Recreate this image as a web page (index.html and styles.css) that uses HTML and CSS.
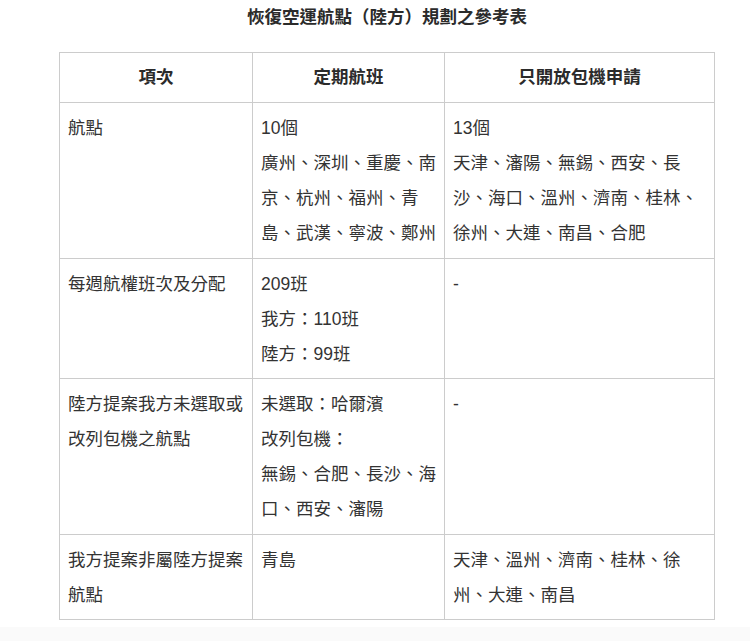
FILE: index.html
```html
<!DOCTYPE html>
<html lang="zh-Hant">
<head>
<meta charset="utf-8">
<link rel="stylesheet" href="styles.css">
</head>
<body>
<div class="page">
  <h1 class="title">恢復空運航點（陸方）規劃之參考表</h1>
  <table class="ref-table">
    <colgroup>
      <col class="c1"><col class="c2"><col class="c3">
    </colgroup>
    <thead>
      <tr><th>項次</th><th>定期航班</th><th>只開放包機申請</th></tr>
    </thead>
    <tbody>
      <tr>
        <td>航點</td>
        <td>10個<br>廣州、深圳、重慶、南京、杭州、福州、青島、武漢、寧波、鄭州</td>
        <td>13個<br>天津、瀋陽、無錫、西安、長沙、海口、溫州、濟南、桂林、徐州、大連、南昌、合肥</td>
      </tr>
      <tr>
        <td>每週航權班次及分配</td>
        <td>209班<br>我方：110班<br>陸方：99班</td>
        <td>-</td>
      </tr>
      <tr>
        <td>陸方提案我方未選取或改列包機之航點</td>
        <td>未選取：哈爾濱<br>改列包機：<br>無錫、合肥、長沙、海口、西安、瀋陽</td>
        <td>-</td>
      </tr>
      <tr>
        <td>我方提案非屬陸方提案航點</td>
        <td>青島</td>
        <td>天津、溫州、濟南、桂林、徐州、大連、南昌</td>
      </tr>
    </tbody>
  </table>
</div>
<div class="foot"></div>
</body>
</html>
```
FILE: styles.css
```css
html, body {
  margin: 0;
  padding: 0;
  background: #ffffff;
}
body {
  font-family: "Liberation Sans", "Noto Sans CJK TC", sans-serif;
  color: #333333;
  font-size: 17.5px;
  line-height: 35px;
}
.page {
  padding: 0 35px 0 59px;
  height: 627px;
  box-sizing: border-box;
}
.title {
  margin: 0;
  padding: 0;
  font-size: 17.5px;
  line-height: 35px;
  font-weight: bold;
  text-align: center;
  color: #2b2b2b;
}
.ref-table {
  margin-top: 17px;
  width: 100%;
  border-collapse: collapse;
  table-layout: fixed;
}
.c1 { width: 193px; }
.c2 { width: 192px; }
.ref-table th,
.ref-table td {
  border: 1px solid #cccccc;
  padding: 8px 8px 6.5px 8px;
  text-align: left;
  vertical-align: top;
  font-weight: normal;
}
.ref-table th {
  text-align: center;
  font-weight: bold;
  padding: 7px 8px;
  color: #2b2b2b;
}
.foot {
  height: 14px;
  background: #fafafa;
}
```
